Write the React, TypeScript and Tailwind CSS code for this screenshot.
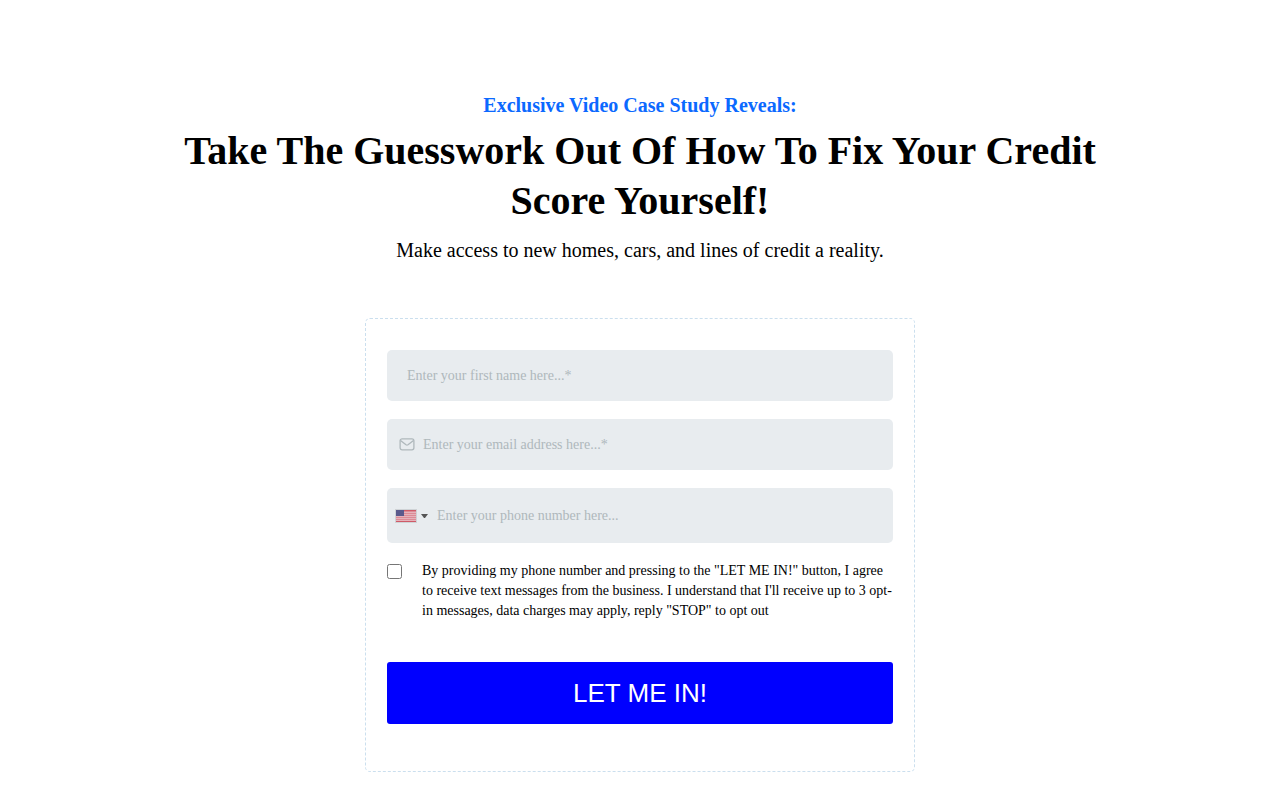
import { ReactNode } from "react";

interface FieldProps {
  id: string;
  label: string;
  type: string;
  placeholder: string;
  className: string;
  children?: ReactNode;
}

function Field({ id, label, type, placeholder, className, children }: Readonly<FieldProps>) {
  return (
    <div className={`flex items-center rounded-[5px] bg-[#e8ecef] ${className}`}>
      {children}
      <input
        id={id}
        type={type}
        aria-label={label}
        placeholder={placeholder}
        className="h-full min-w-0 flex-1 bg-transparent text-sm text-black outline-none placeholder:text-[#afb8bc]"
      />
    </div>
  );
}

function MailIcon() {
  return (
    <svg className="mr-2 h-4 w-4 shrink-0" viewBox="0 0 16 16" fill="none" stroke="#afb8bc" strokeWidth="1.3">
      <rect x="1.1" y="1.8" width="13.8" height="11" rx="2" />
      <path d="M1.5 3.4 L7 7.8 Q8 8.5 9 7.8 L14.5 3.4" />
    </svg>
  );
}

function FlagIcon() {
  return (
    <svg className="h-3 w-5 shrink-0 outline outline-[#cfd3d6]" viewBox="0 0 20 12" shapeRendering="crispEdges">
      <rect width="20" height="12" fill="#dc8b96" />
      <path d="M0 .5H20M0 11.5H20" stroke="#cf5b68" />
      <path d="M0 2.5H20M0 4.5H20M0 6.5H20M0 8.5H20M0 10.5H20" stroke="#e5b3bb" />
      <rect width="8" height="6" fill="#5a5a8c" />
    </svg>
  );
}

export default function App() {
  return (
    <main className="px-5 pt-[92px] pb-7 font-['Liberation_Serif',serif] text-black">
      <header className="mx-auto max-w-[960px] text-center">
        <p className="text-[20px] leading-[26px] font-bold text-[#0b69ff]">
          Exclusive Video Case Study Reveals:
        </p>
        <h1 className="mx-auto mt-2 max-w-[940px] text-[40px] leading-[50px] font-bold">
          Take The Guesswork Out Of How To Fix Your Credit Score Yourself!
        </h1>
        <p className="mt-3 text-[20px] leading-6">
          Make access to new homes, cars, and lines of credit a reality.
        </p>
      </header>

      <form
        className="mx-auto mt-14 flex max-w-[550px] flex-col rounded-[5px] border border-dashed border-[#cbdfee] px-[21px] pt-[31px] pb-[47px]"
        onSubmit={(e) => e.preventDefault()}
      >
        <Field
          id="name"
          label="First name"
          type="text"
          placeholder="Enter your first name here...*"
          className="h-[51px] px-5"
        />
        <Field
          id="email"
          label="Email address"
          type="email"
          placeholder="Enter your email address here...*"
          className="mt-[18px] h-[51px] px-3"
        >
          <MailIcon />
        </Field>
        <Field
          id="phone"
          label="Phone number"
          type="tel"
          placeholder="Enter your phone number here..."
          className="mt-[18px] h-[55px] pr-2 pl-[9px]"
        >
          <button type="button" aria-label="Select country" className="mr-2 flex items-center gap-1">
            <FlagIcon />
            <svg className="h-2 w-[9px]" viewBox="0 0 9 8">
              <path d="M1 2H8L5 6H4Z" fill="#555" />
            </svg>
          </button>
        </Field>

        <div className="mt-[18px] flex items-start">
          <input id="consent" type="checkbox" className="mt-[3px] h-[15px] w-[15px] shrink-0" />
          <label htmlFor="consent" className="ml-5 text-sm leading-5">
            By providing my phone number and pressing to the "LET ME IN!" button, I agree to receive
            text messages from the business. I understand that I'll receive up to 3 opt-in messages,
            data charges may apply, reply "STOP" to opt out
          </label>
        </div>

        <button
          type="submit"
          className="mt-[41px] h-[62px] rounded-[3px] bg-[#0000ff] font-['Liberation_Sans',sans-serif] text-[26px] text-white"
        >
          LET ME IN!
        </button>
      </form>
    </main>
  );
}
